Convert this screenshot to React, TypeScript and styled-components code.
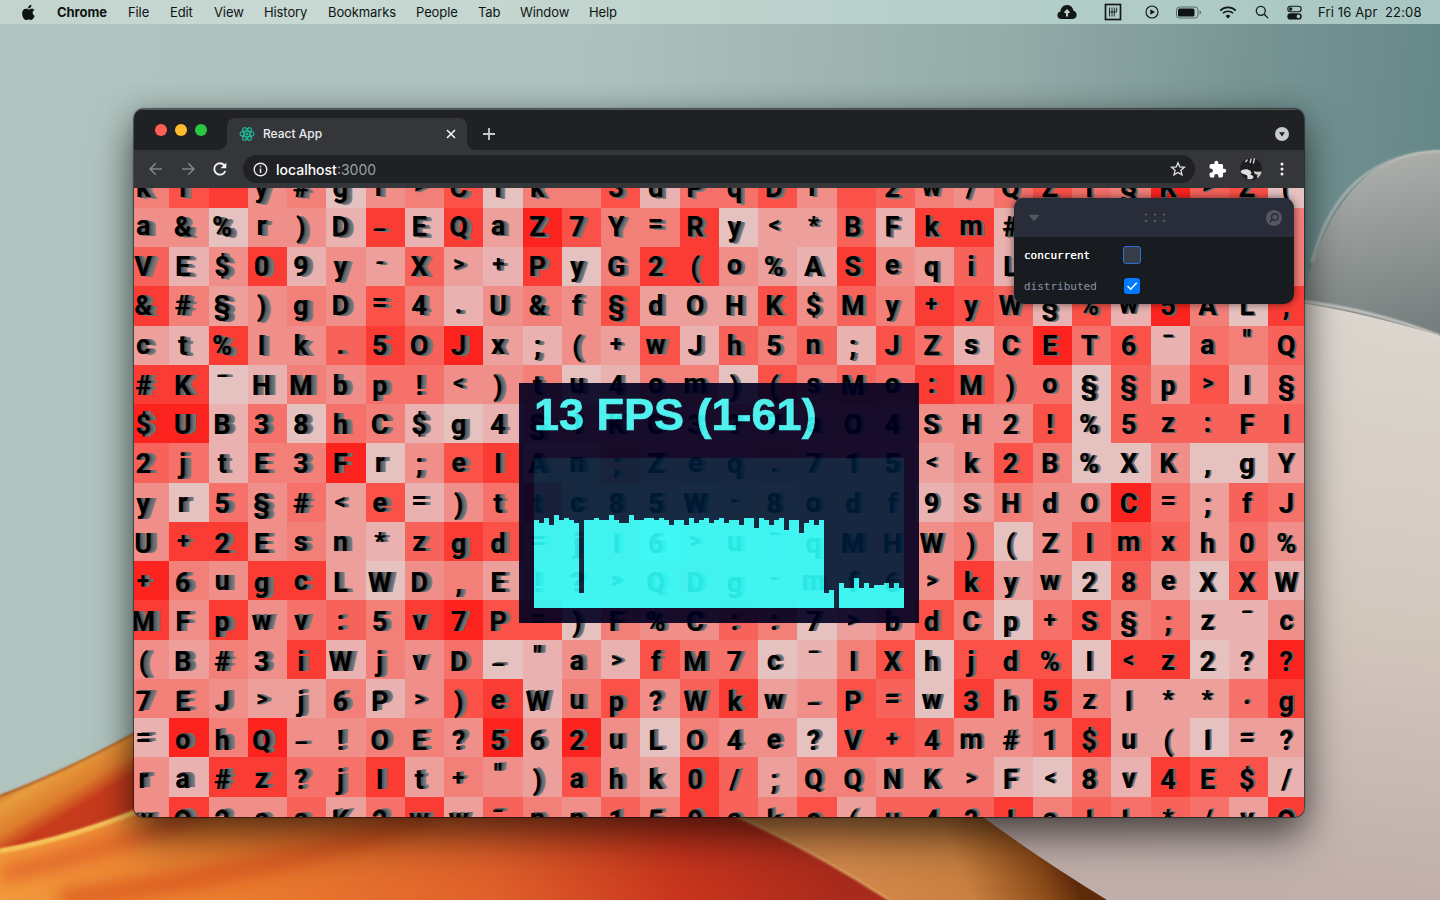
import React from 'react';
import styled, { createGlobalStyle } from 'styled-components';

const Global = createGlobalStyle`
  * { box-sizing: border-box; }
  body { margin: 0; overflow: hidden; font-family: Inter, "Liberation Sans", sans-serif; }
  svg { display: block; flex-shrink: 0; }
`;

const Desktop = styled.div`
  position: relative;
  width: 1440px;
  height: 900px;
  overflow: hidden;
  background: #afc3be;
`;
const WallpaperSvg = styled.svg`
  position: absolute;
  inset: 0;
`;
const Layer = styled.div`
  position: relative;
  display: flex;
  flex-direction: column;
  height: 100%;
`;

/* ---------- menu bar ---------- */
const MenuBar = styled.header`
  display: flex;
  justify-content: space-between;
  align-items: center;
  height: 24px;
  padding: 0 19px 0 21px;
  background: linear-gradient(90deg, #c3d3ce 0%, #c8d8d2 22%, #bfd3cd 50%, #b2cdc7 75%, #a9c6c3 100%);
  color: #0d1413;
  font-size: 13px;
`;
const MenuItems = styled.nav`
  display: grid;
  grid-template-columns: 36px 71px 42px 44px 50px 64px 88px 62px 42px 69px 40px;
  align-items: center;
`;
const MenuItem = styled.span<{ $strong?: boolean }>`
  font-weight: ${p => (p.$strong ? 700 : 400)};
  letter-spacing: ${p => (p.$strong ? '-0.05px' : '-0.1px')};
  white-space: nowrap;
`;
const StatusItems = styled.div`
  display: grid;
  grid-template-columns: 47px 41px 31px 43px 36px 32px 31px 103px;
  align-items: center;
`;
const Clock = styled.span`
  white-space: pre;
  letter-spacing: 0.14px;
`;

/* ---------- browser window ---------- */
const BrowserWindow = styled.main`
  display: flex;
  flex-direction: column;
  width: 1170px;
  height: 708px;
  margin: 85px 0 0 134px;
  border-radius: 10px;
  overflow: hidden;
  background: #35363a;
  box-shadow: 0 0 1px 0.5px rgba(0, 0, 0, 0.5), 0 22px 42px rgba(0, 0, 0, 0.5), 0 4px 30px rgba(0, 0, 0, 0.28);
`;
const TabStrip = styled.div`
  display: flex;
  height: 41px;
  padding: 8px 15px 0 21px;
  background: #202124;
  border-top: 1px solid #54595a;
`;
const Lights = styled.div`
  display: flex;
  gap: 8px;
  width: 72px;
  padding-top: 6px;
`;
const Light = styled.i<{ $color: string }>`
  width: 12px;
  height: 12px;
  border-radius: 50%;
  background: ${p => p.$color};
`;
const Tab = styled.div`
  position: relative;
  display: flex;
  align-items: center;
  width: 240px;
  height: 32px;
  padding: 0 10px 1px 12px;
  border-radius: 8px 8px 0 0;
  background: #35363a;
  color: #eceef0;
  font-size: 12px;
  font-weight: 500;
  &::before, &::after {
    content: '';
    position: absolute;
    bottom: 0;
    width: 8px;
    height: 8px;
  }
  &::before { left: -8px; background: radial-gradient(circle at 0 0, transparent 7.5px, #35363a 8px); }
  &::after { right: -8px; background: radial-gradient(circle at 100% 0, transparent 7.5px, #35363a 8px); }
`;
const TabTitle = styled.span`
  flex: 1;
  margin-left: 8px;
`;
const StripButton = styled.div<{ $push?: boolean }>`
  margin: ${p => (p.$push ? '9px 0 0 auto' : '9px 0 0 15px')};
`;
const Toolbar = styled.div`
  display: flex;
  align-items: center;
  height: 38px;
  padding: 0 14px;
`;
const NavButtons = styled.div`
  display: flex;
  gap: 16px;
  width: 95px;
`;
const AddressPill = styled.div`
  display: flex;
  align-items: center;
  width: 952px;
  height: 28px;
  padding: 0 9px 0 10px;
  border-radius: 14px;
  background: #202124;
  color: #9aa0a6;
  font-size: 14px;
`;
const Url = styled.span`
  flex: 1;
  margin-left: 8px;
`;
const Host = styled.b`
  font-weight: 500;
  color: #fff;
`;
const Actions = styled.div`
  display: flex;
  align-items: center;
  gap: 11.5px;
  margin-left: 13px;
`;

/* ---------- glyph field ---------- */
const Viewport = styled.section`
  position: relative;
  flex: 1;
  overflow: hidden;
  background: #f08580;
`;
const Field = styled.div`
  display: grid;
  grid-template-columns: repeat(30, 39.25px);
  grid-auto-rows: 39.25px;
  margin: -19.3px 0 0 -3.9px;
`;
const shades = ['#e5c1c0', '#e9b1af', '#ed9f9b', '#f08f8a', '#f37f79', '#f5716a', '#f7625a', '#fa5148', '#fb3c34', '#fd231e'];
const Tile = styled.div<{ $level: number }>`
  display: flex;
  justify-content: center;
  background: ${p => shades[p.$level]};
`;
const Glyph = styled.span`
  font: 700 27px/41.2px Roboto, "Liberation Sans", sans-serif;
  color: #000;
  text-shadow:
    calc(var(--dx) * 0.17) calc(var(--dy) * 0.17) 0 #474747,
    calc(var(--dx) * 0.34) calc(var(--dy) * 0.34) 0 #5a5a5a,
    calc(var(--dx) * 0.5) calc(var(--dy) * 0.5) 0 #666,
    calc(var(--dx) * 0.67) calc(var(--dy) * 0.67) 0 #6e6e6e,
    calc(var(--dx) * 0.84) calc(var(--dy) * 0.84) 0 #757575,
    var(--dx) var(--dy) 0 #7e7e7e;
  transform: translate(calc(var(--dx) * -1), calc(var(--lift) - var(--dy))) scale(var(--scale));
`;

const glyphRows: [string, string][] = [
  ['ki y#gr>Cik-3dPqDr 2w/QZI§K>Z(', '478340347044715573764357549670'],
  ['a&%r)D_EQaZ7Y=Ry<*BFkm#       ', '330331818297448022618813333334'],
  ['VE$09y-X>+PyG2(o%ASeqiL       ', '613813262180488321832613333334'],
  ['&#§)gD=4.U&f§dOHK$My+yW§%w5AL,', '842343741343722273648761719408'],
  ['ct%Ik.5OJx;(+wJh5n;JZsCET6¯a"Q', '218336869213271646175159571546'],
  ['#K¯HMbp!<)tu4om)(sMo:M)o§§p>I§', '880143553340144074658755063725'],
  ['$UB38hC$g4§1KC3?7aO4SH2!%5z:FI', '991505410133333333333337066666'],
  ['2jtE3Fr;eIAn;Zeq.715<k2B%XK,gY', '651449037822533343332374003002'],
  ['yr5§#<e=)ttc85W-8odf9SHdOC=;fJ', '305352713572221223331243395265'],
  ['U+2Esn*zgd=jI6>u¯qMHW)(ZImxh0%', '388342168743403323333403676253'],
  ['+6ugcLWD,E!?>QDg-mf6>kyw28eXXW', '943882034233334333333823062061'],
  ['MFpwv:5v7P=)F%C::7>bdCp+S§;z¯c', '838356489770433640237405745113'],
  ['(B#3iWjvD_"a>fM7c¯IXhjd%I<z2??', '324381435013175501470777088019'],
  ['7EJ>j6P>)eWup?Wkw_P=w3h5zI**·g', '443224137814736823760838422258'],
  ['=ohQ_!OE?562uLO4e?V+4m#1$u(I=?', '194933443929304330776334822022'],
  ['ra#z?jIt+")ahk0/;QQNK>F<8v4E$/', '318855824327328624433310418771'],
  ['wO2ssK2ww¯nn159ake(u4?!aIL*/vQ', '383362582643648647266684656528'],
];

const liftOf = (ch: string) => {
  if ('acemnorsuvwxz'.includes(ch)) return -1.5;
  if ('=-'.includes(ch)) return -4;
  if ('"'.includes(ch)) return -5;
  if ('_'.includes(ch)) return -8;
  if ('*+<>'.includes(ch)) return -2.5;
  if ('.:'.includes(ch)) return -1.5;
  if ('()'.includes(ch)) return 1;
  return 0;
};
const scaleOf = (ch: string) => {
  if ('<>'.includes(ch)) return 0.8;
  if ('+-'.includes(ch)) return 0.82;
  if ('*_'.includes(ch)) return 0.92;
  return 1;
};

const GlyphField = () => (
  <Field>
    {glyphRows.flatMap(([chars, levels], r) =>
      [...chars].map((ch, c) => (
        <Tile key={`${r}-${c}`} $level={Number(levels[c])}>
          <Glyph
            style={{
              '--dx': `${(6.6 - c * 0.165).toFixed(2)}px`,
              '--dy': `${(1.5 - r * 0.17).toFixed(2)}px`,
              '--lift': `${(liftOf(ch) + 0.6 + r * 0.11).toFixed(2)}px`,
              '--scale': scaleOf(ch),
            } as React.CSSProperties}
          >
            {ch}
          </Glyph>
        </Tile>
      )),
    )}
  </Field>
);

/* ---------- FPS meter ---------- */
const Meter = styled.aside`
  position: absolute;
  left: 385px;
  top: 195px;
  width: 400px;
  height: 240px;
  padding: 8px 15px 15px;
  opacity: 0.9;
  background: #000020;
`;
const MeterText = styled.div`
  height: 67px;
  font: 700 45px/48px "Liberation Sans", Arial, sans-serif;
  color: #40fcfa;
  -webkit-text-stroke: 0.7px #40fcfa;
  white-space: nowrap;
`;
const MeterGraph = styled.div`
  display: flex;
  align-items: flex-end;
  height: 150px;
  background: #001c38;
`;
const MeterBar = styled.i`
  width: 5px;
  background: #2efffb;
`;
const barTops = [
  435, 443, 428, 450, 420, 435, 428, 435, 443, 653, 435, 435, 428, 435, 435, 420, 435, 443, 443, 420, 435, 435, 428, 428, 435,
  428, 435, 450, 435, 435, 450, 428, 443, 435, 428, 443, 435, 428, 443, 435, 435, 450, 428, 428, 458, 428, 435, 450, 435, 428,
  465, 435, 435, 472, 443, 435, 450, 435, 653, 645, 698, 623, 638, 638, 608, 638, 623, 638, 630, 630, 623, 638, 623, 638,
];

/* ---------- control panel ---------- */
const Panel = styled.aside`
  position: absolute;
  left: 880px;
  top: 10px;
  width: 280px;
  height: 106px;
  border-radius: 10px;
  overflow: hidden;
  background: #181c20;
  box-shadow: 0 0 9px rgba(0, 0, 0, 0.55);
`;
const PanelHeader = styled.div`
  display: flex;
  align-items: center;
  justify-content: space-between;
  height: 39px;
  padding: 0 12px 0 14px;
  background: #292d39;
`;
const DragDots = styled.svg`
  margin-left: 4px;
`;
const Control = styled.label<{ $active?: boolean }>`
  display: grid;
  grid-template-columns: 99px 18px;
  align-items: center;
  justify-items: center;
  height: ${p => (p.$active ? 36 : 26)}px;
  padding-left: 10px;
  font: 11px "DejaVu Sans Mono", "Liberation Mono", monospace;
  color: ${p => (p.$active ? '#fefefe' : '#8c92a4')};
  text-shadow: ${p => (p.$active ? '0 0 0.6px #fff' : 'none')};
`;
const ControlName = styled.span`
  justify-self: start;
`;
const CheckBox = styled.span<{ $on?: boolean }>`
  display: grid;
  place-items: center;
  width: ${p => (p.$on ? 16 : 18)}px;
  height: ${p => (p.$on ? 16 : 18)}px;
  border-radius: 3px;
  border: ${p => (p.$on ? 'none' : '1px solid #2b6fd2')};
  background: ${p => (p.$on ? '#007bff' : '#373c4b')};
`;

const Wallpaper = () => (
  <WallpaperSvg width="1440" height="900" viewBox="0 0 1440 900">
    <defs>
      <linearGradient id="sky" x1="0" y1="0" x2="1440" y2="140" gradientUnits="userSpaceOnUse">
        <stop offset="0" stopColor="#b1c4bf" />
        <stop offset="0.42" stopColor="#adc1bd" />
        <stop offset="0.7" stopColor="#94aba8" />
        <stop offset="0.86" stopColor="#789594" />
        <stop offset="1" stopColor="#66888a" />
      </linearGradient>
      <linearGradient id="orb" x1="1360" y1="150" x2="1400" y2="330" gradientUnits="userSpaceOnUse">
        <stop offset="0" stopColor="#b0b2ae" />
        <stop offset="0.35" stopColor="#9b9f9d" />
        <stop offset="1" stopColor="#76807f" />
      </linearGradient>
      <linearGradient id="sand" x1="1360" y1="310" x2="1300" y2="900" gradientUnits="userSpaceOnUse">
        <stop offset="0" stopColor="#dcd6cf" />
        <stop offset="0.5" stopColor="#d3c8be" />
        <stop offset="1" stopColor="#c0aeaa" />
      </linearGradient>
      <linearGradient id="band" x1="860" y1="900" x2="1050" y2="820" gradientUnits="userSpaceOnUse">
        <stop offset="0" stopColor="#d2884a" />
        <stop offset="0.5" stopColor="#c98040" />
        <stop offset="0.85" stopColor="#8a4a18" />
        <stop offset="1" stopColor="#5d2a0a" />
      </linearGradient>
      <linearGradient id="fire" x1="0" y1="900" x2="840" y2="810" gradientUnits="userSpaceOnUse">
        <stop offset="0" stopColor="#f29a3c" />
        <stop offset="0.25" stopColor="#ea7f30" />
        <stop offset="0.58" stopColor="#e0602a" />
        <stop offset="0.8" stopColor="#c8351d" />
        <stop offset="1" stopColor="#a82a1c" />
      </linearGradient>
      <linearGradient id="ribbon" x1="50" y1="760" x2="90" y2="825" gradientUnits="userSpaceOnUse">
        <stop offset="0" stopColor="#c9702c" />
        <stop offset="0.18" stopColor="#e89c3e" />
        <stop offset="0.5" stopColor="#dc7c2c" />
        <stop offset="0.72" stopColor="#c83c1c" />
        <stop offset="1" stopColor="#c43a1c" />
      </linearGradient>
      <filter id="soft" x="-20%" y="-50%" width="140%" height="200%"><feGaussianBlur stdDeviation="9" /></filter>
      <filter id="edge"><feGaussianBlur stdDeviation="1.2" /></filter>
    </defs>
    <rect width="1440" height="900" fill="url(#sky)" />
    <path d="M1290 360 C1310 230 1352 152 1440 150 V360 Z" fill="url(#orb)" />
    <path d="M1312 262 C1328 200 1365 154 1440 151" fill="none" stroke="#c3c1ba" strokeWidth="2" filter="url(#edge)" />
    <path d="M1240 296 Q1330 302 1440 336 V900 H1080 L940 790 Z" fill="url(#sand)" />
    <path d="M1300 301 Q1370 309 1440 336" fill="none" stroke="#e8e2da" strokeWidth="2" filter="url(#edge)" />
    <path d="M640 780 H946 L983 817 Q1037 857 1107 900 H850 Z" fill="url(#band)" />
    <path d="M0 795 Q75 767 160 718 V830 L0 860 Z" fill="url(#ribbon)" />
    <path d="M0 796 Q75 768 160 719" fill="none" stroke="#a65f33" strokeWidth="2" filter="url(#edge)" />
    <path d="M0 849 Q75 836 160 800 H700 Q800 842 889 900 H0 Z" fill="url(#fire)" />
    <path d="M0 875 Q110 850 210 810" fill="none" stroke="#dc5420" strokeWidth="12" filter="url(#soft)" />
    <path d="M60 900 Q300 868 430 815" fill="none" stroke="#d9551f" strokeWidth="16" filter="url(#soft)" />
    <path d="M0 851 Q75 838 160 802" fill="none" stroke="#f5c25a" strokeWidth="5" filter="url(#edge)" />
    <path d="M700 800 Q800 842 889 900" fill="none" stroke="#dfa766" strokeWidth="2" filter="url(#edge)" />
  </WallpaperSvg>
);

const AppleIcon = () => (
  <svg width="15" height="17" viewBox="0 0 24 26" fill="#0d1413">
    <path d="M16.6 0.5c.2 1.7-.5 3.2-1.400 4.300-1 1.200-2.400 1.900-3.900 1.800-.2-1.600.6-3.200 1.500-4.200C13.800 1.300 15.400.6 16.600.5zM21.500 9c-2 1.200-2.900 2.600-2.900 4.500 0 2.200 1.200 4 3.300 4.800-.9 2.700-3.200 6.700-5.600 6.700-1.500 0-2.100-.9-4-.9s-2.500.9-4 .9C5.200 25.100 1.800 19.400 1.800 14.500c0-4.700 2.900-7.400 6-7.400 1.900 0 3.200 1.100 4.600 1.100 1.300 0 2.700-1.200 5-1.200 1.600 0 3.200.8 4.100 2z" />
  </svg>
);
const CloudIcon = () => (
  <svg width="20" height="16" viewBox="0 0 20 16">
    <path d="M4.600 15C2 15 .4 13.300.4 11.200c0-1.900 1.200-3.300 3-3.700C3.700 3.800 6.500 1 10 1c3.300 0 6 2.400 6.500 5.700 1.900.4 3.200 2 3.200 4.100 0 2.400-1.800 4.200-4.300 4.200z" fill="#111817" />
    <path d="M10 12.500V7M7.600 8.800 10 6.300l2.400 2.500" fill="none" stroke="#c2d5cf" strokeWidth="1.900" />
  </svg>
);
const FrameIcon = () => (
  <svg width="18" height="18" viewBox="0 0 18 18" fill="none" stroke="#111817">
    <rect x="1.500" y="1.500" width="15" height="15" strokeWidth="1.700" />
    <path d="M5.500 4.500v9M8 4.500v9M10.300 4.500v9M12.600 4.500v4.500M5.500 9h7.100" strokeWidth="0.900" />
  </svg>
);
const PlayIcon = () => (
  <svg width="14" height="14" viewBox="0 0 14 14">
    <circle cx="7" cy="7" r="6" fill="none" stroke="#111817" strokeWidth="1.100" />
    <path d="M5.300 4.300 10 7 5.300 9.700z" fill="#111817" />
  </svg>
);
const BatteryIcon = () => (
  <svg width="26" height="13" viewBox="0 0 26 13">
    <rect x="0.500" y="1" width="21.500" height="11" rx="3" fill="none" stroke="#5a6b68" />
    <rect x="2" y="2.500" width="16.500" height="8" rx="1.600" fill="#0d1413" />
    <path d="M23.500 4.600q1.600.6 1.600 1.900t-1.600 1.900z" fill="#5a6b68" />
  </svg>
);
const WifiIcon = () => (
  <svg width="18" height="13" viewBox="0 0 18 13" fill="none" stroke="#111817" strokeWidth="1.600">
    <path d="M1.200 4.600a11 11 0 0 1 15.600 0M3.900 7.300a7.200 7.200 0 0 1 10.200 0" />
    <path d="M6.600 10a3.400 3.400 0 0 1 4.800 0L9 12.400z" fill="#111817" stroke="none" />
  </svg>
);
const SearchIcon = () => (
  <svg width="14" height="14" viewBox="0 0 14 14" fill="none" stroke="#111817" strokeWidth="1.300">
    <circle cx="5.800" cy="5.800" r="4.500" />
    <path d="m9.200 9.200 3.600 3.700" strokeLinecap="round" />
  </svg>
);
const ControlCenterIcon = () => (
  <svg width="15" height="15" viewBox="0 0 15 15">
    <rect x="0.800" y="1.300" width="13.400" height="5.400" rx="2.700" fill="none" stroke="#111817" strokeWidth="1.100" />
    <circle cx="3.700" cy="4" r="1.700" fill="#111817" />
    <rect x="0.300" y="8.300" width="14.400" height="6.200" rx="3.100" fill="#111817" />
    <circle cx="11.400" cy="11.400" r="1.800" fill="#b3ccc7" />
  </svg>
);
const ReactIcon = () => (
  <svg width="16" height="16" viewBox="0 0 16 16" fill="none" stroke="#1fb596" strokeWidth="1.200">
    <ellipse cx="8" cy="8" rx="7" ry="2.800" />
    <ellipse cx="8" cy="8" rx="7" ry="2.800" transform="rotate(60 8 8)" />
    <ellipse cx="8" cy="8" rx="7" ry="2.800" transform="rotate(120 8 8)" />
    <circle cx="8" cy="8" r="1.400" fill="#1fb596" stroke="none" />
  </svg>
);
const ArrowIcon = ({ flip }: { flip?: boolean }) => (
  <svg width="16" height="16" viewBox="0 0 16 16" fill="none" stroke="#818488" strokeWidth="1.500">
    <path d={flip ? 'M2 8h12M8.200 2.200 14 8l-5.800 5.800' : 'M14 8H2M7.800 2.200 2 8l5.800 5.800'} />
  </svg>
);
const ReloadIcon = () => (
  <svg width="16" height="16" viewBox="0 0 16 16">
    <path d="M13.300 10A5.700 5.700 0 1 1 12.200 4.100L13.300 5.300" fill="none" stroke="#f1f3f4" strokeWidth="1.800" />
    <path d="M14.300 1.400v5.800H8.500z" fill="#f1f3f4" />
  </svg>
);
const InfoIcon = () => (
  <svg width="15" height="15" viewBox="0 0 15 15">
    <circle cx="7.500" cy="7.500" r="6.300" fill="none" stroke="#e8eaed" strokeWidth="1.400" />
    <path d="M7.500 6.500V11M7.500 3.700v1.500" stroke="#e8eaed" strokeWidth="1.500" />
  </svg>
);
const StarIcon = () => (
  <svg width="16" height="16" viewBox="0 0 16 16" fill="none" stroke="#e0e2e5" strokeWidth="1.300">
    <path d="m8 1.700 1.800 4.200 4.600.4-3.500 3 1.100 4.500L8 11.400l-4 2.400 1.100-4.500-3.500-3 4.600-.4z" />
  </svg>
);
const PuzzleIcon = () => (
  <svg width="19" height="19" viewBox="0 0 24 24" fill="#fff">
    <path d="M20.500 11H19V7c0-1.100-.9-2-2-2h-4V3.500a2.500 2.500 0 0 0-5 0V5H4a2 2 0 0 0-2 2v3.800h1.500a2.700 2.700 0 0 1 0 5.400H2V20c0 1.100.9 2 2 2h3.800v-1.500a2.700 2.700 0 0 1 5.400 0V22H17a2 2 0 0 0 2-2v-4h1.500a2.500 2.500 0 0 0 0-5z" />
  </svg>
);
const Avatar = () => (
  <svg width="24" height="24" viewBox="0 0 24 24">
    <circle cx="12" cy="12" r="11" fill="#1d1e20" />
    <path d="M8.500 2.500 6.500 5M12.200 1.500 11 6M15.500 1.200 14.300 6.500" stroke="#d7d7d7" strokeWidth="1.300" fill="none" />
    <path d="M1.500 14.500c2-2.800 7.500-3 10-.5 1.600 1.700 1 3-.3 3.800 1.500.2 3.300.7 3.300 2.700-.8 2-4.800 2.300-6.500 1 1-1.200.6-2.500-.6-3.400C5.800 17.200 3 17.500 1.500 14.500z" fill="#dedede" />
    <path d="M15 14c2.500 1.500 4.500.2 7.500.4-.2 2.800-1.600 4.600-3.900 6.600-1.200-.2-.5-2.100.3-3.200-1.900.2-4-1-3.900-3.800z" fill="#cfcfcf" />
  </svg>
);

export default function App() {
  return (
    <>
      <Global />
      <Desktop>
        <Wallpaper />
        <Layer>
          <MenuBar>
            <MenuItems>
              <AppleIcon />
              <MenuItem $strong>Chrome</MenuItem>
              {['File', 'Edit', 'View', 'History', 'Bookmarks', 'People', 'Tab', 'Window', 'Help'].map(label => (
                <MenuItem key={label}>{label}</MenuItem>
              ))}
            </MenuItems>
            <StatusItems>
              <CloudIcon />
              <FrameIcon />
              <PlayIcon />
              <BatteryIcon />
              <WifiIcon />
              <SearchIcon />
              <ControlCenterIcon />
              <Clock>{'Fri 16 Apr  22:08'}</Clock>
            </StatusItems>
          </MenuBar>

          <BrowserWindow>
            <TabStrip>
              <Lights>
                <Light $color="#ff5f57" />
                <Light $color="#febc2e" />
                <Light $color="#28c840" />
              </Lights>
              <Tab>
                <ReactIcon />
                <TabTitle>React App</TabTitle>
                <svg width="12" height="12" viewBox="0 0 12 12" stroke="#f1f3f4" strokeWidth="1.600">
                  <path d="m2 2 8 8M10 2l-8 8" />
                </svg>
              </Tab>
              <StripButton>
                <svg width="14" height="14" viewBox="0 0 14 14" stroke="#c7c9cc" strokeWidth="1.800">
                  <path d="M7 1v12M1 7h12" />
                </svg>
              </StripButton>
              <StripButton $push>
                <svg width="14" height="14" viewBox="0 0 14 14">
                  <circle cx="7" cy="7" r="7" fill="#c8cacd" />
                  <path d="M4 5.200h6L7 9.600z" fill="#202124" />
                </svg>
              </StripButton>
            </TabStrip>
            <Toolbar>
              <NavButtons>
                <ArrowIcon />
                <ArrowIcon flip />
                <ReloadIcon />
              </NavButtons>
              <AddressPill>
                <InfoIcon />
                <Url><Host>localhost</Host>:3000</Url>
                <StarIcon />
              </AddressPill>
              <Actions>
                <PuzzleIcon />
                <Avatar />
                <svg width="16" height="16" viewBox="0 0 16 16" fill="#f1f3f4">
                  <circle cx="8" cy="3" r="1.500" />
                  <circle cx="8" cy="8" r="1.500" />
                  <circle cx="8" cy="13" r="1.500" />
                </svg>
              </Actions>
            </Toolbar>
            <Viewport>
              <GlyphField />
              <Meter>
                <MeterText>13 FPS (1-61)</MeterText>
                <MeterGraph>
                  {barTops.map((top, i) => (
                    <MeterBar key={i} style={{ height: `${((698 - top) / 3).toFixed(1)}px` }} />
                  ))}
                </MeterGraph>
              </Meter>
              <Panel>
                <PanelHeader>
                  <svg width="12" height="8" viewBox="0 0 12 8"><path d="M.8 1.500Q.8.800 1.600.8h8.800q.8 0 .8.700L6.600 6.600q-.6.700-1.200 0z" fill="#535760" /></svg>
                  <DragDots width="22" height="10" viewBox="0 0 22 10" fill="#535760">
                    {[2, 11, 20].map(x => (
                      <g key={x}>
                        <circle cx={x} cy="1.500" r="1.300" />
                        <circle cx={x} cy="8" r="1.300" />
                      </g>
                    ))}
                  </DragDots>
                  <svg width="16" height="16" viewBox="0 0 16 16">
                    <circle cx="8" cy="8" r="8" fill="#535760" />
                    <circle cx="8.800" cy="7" r="3.300" fill="none" stroke="#292d39" strokeWidth="1.500" />
                    <path d="m6.300 9.500-2.500 2.500" stroke="#292d39" strokeWidth="1.700" />
                  </svg>
                </PanelHeader>
                <Control $active>
                  <ControlName>concurrent</ControlName>
                  <CheckBox />
                </Control>
                <Control>
                  <ControlName>distributed</ControlName>
                  <CheckBox $on>
                    <svg width="12" height="10" viewBox="0 0 12 10" fill="none" stroke="#fff" strokeWidth="1.500">
                      <path d="m1.500 5 3.200 3.200 6-6.500" />
                    </svg>
                  </CheckBox>
                </Control>
              </Panel>
            </Viewport>
          </BrowserWindow>
        </Layer>
      </Desktop>
    </>
  );
}
